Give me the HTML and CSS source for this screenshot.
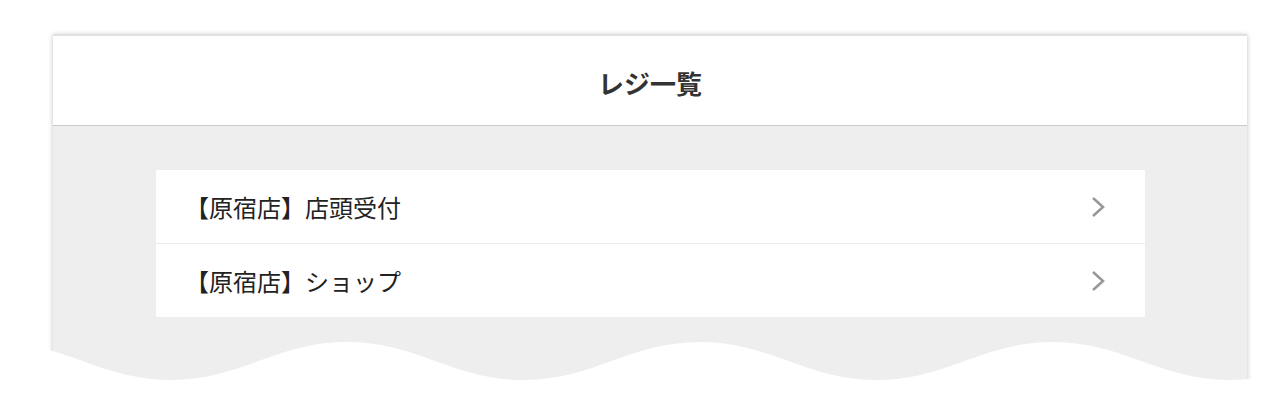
FILE: index.html
```html
<!DOCTYPE html>
<html lang="ja">
<head>
    <meta charset="UTF-8">
    <meta name="viewport" content="width=device-width, initial-scale=1.0">
    <title>レジ一覧</title>
    <link rel="stylesheet" href="styles.css">
</head>
<body>
    <div class="page">
        <div class="panel">
            <div class="panel-header">
                <h1>レジ一覧</h1>
            </div>

            <div class="panel-body">
                <ul class="register-list">
                    <li>
                        <a href="#">
                            <span>【原宿店】店頭受付</span>
                            <svg class="chevron" width="14" height="22" viewBox="0 0 14 22">
                                <polyline points="2,2 12,11 2,20" />
                            </svg>
                        </a>
                    </li>
                    <li>
                        <a href="#">
                            <span>【原宿店】ショップ</span>
                            <svg class="chevron" width="14" height="22" viewBox="0 0 14 22">
                                <polyline points="2,2 12,11 2,20" />
                            </svg>
                        </a>
                    </li>
                </ul>

                <!-- torn edge at the bottom of the panel -->
                <svg class="wave" width="1210" height="46" viewBox="0 0 1210 46">
                    <path d="M-51,0 C19.6,0 54.9,38 125.5,38 S231.4,0 302,0 S407.9,38 478.5,38 S584.4,0 655,0 S760.9,38 831.5,38 S937.4,0 1008,0 S1113.9,38 1184.5,38 S1290.4,0 1361,0 L1361,46 L-51,46 Z" />
                </svg>
            </div>
        </div>
    </div>
</body>
</html>
```

FILE: styles.css
```css
body {
    margin: 0;
    background-color: #fff;
    font-family: "Noto Sans CJK JP", "Noto Sans", sans-serif;
    color: #222;
}

.page {
    padding: 34px 41px 0 53px;
}

.panel {
    background-color: #eee;
    border-top: 2px solid #e0e0e0;
    box-shadow: 0 1px 5px rgba(0, 0, 0, 0.25);
}

.panel-header {
    background-color: #fff;
    height: 89px;
    border-bottom: 1px solid #cacaca;
    display: flex;
    align-items: center;
    justify-content: center;
}

.panel-header h1 {
    margin: 4px 0 0;
    font-size: 26px;
    font-weight: bold;
    color: #333;
}

.panel-body {
    padding-top: 44px;
}

.register-list {
    list-style: none;
    margin: 0 102px 25px 103px;
    padding: 0;
    background-color: #fff;
}

.register-list li + li {
    border-top: 1px solid #ececec;
}

.register-list a {
    display: flex;
    align-items: center;
    justify-content: space-between;
    height: 73px;
    padding: 0 40px 0 29px;
    font-size: 24px;
    line-height: 1;
    color: #222;
    text-decoration: none;
}

.chevron polyline {
    fill: none;
    stroke: #999;
    stroke-width: 2.6;
}

.wave {
    display: block;
    margin: 0 -8px;
}

.wave path {
    fill: #fff;
}
```
